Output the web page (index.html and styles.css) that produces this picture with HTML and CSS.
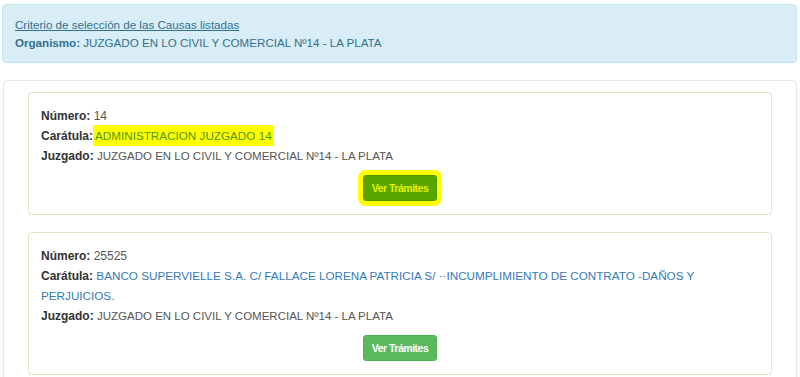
FILE: index.html
```html
<!DOCTYPE html>
<html lang="es">
<head>
  <meta charset="UTF-8">
  <meta name="viewport" content="width=device-width, initial-scale=1.0">
  <title>Causas listadas</title>
  <link rel="stylesheet" href="styles.css">
</head>
<body>
  <div class="alert">
    <a href="#" class="criterio">Criterio de selección de las Causas listadas</a><br>
    <b>Organismo:</b> JUZGADO EN LO CIVIL Y COMERCIAL Nº14 - LA PLATA
  </div>

  <div class="panel">
    <div class="causa">
      <div><b>Número:</b> 14</div>
      <div><b>Carátula:</b><span class="caratula marcado">ADMINISTRACION JUZGADO 14</span></div>
      <div><b>Juzgado:</b> <span class="juzgado">JUZGADO EN LO CIVIL Y COMERCIAL Nº14 - LA PLATA</span></div>
      <div class="acciones">
        <button class="btn marcado-btn">Ver Trámites</button>
      </div>
    </div>

    <div class="causa">
      <div><b>Número:</b> 25525</div>
      <div><b>Carátula:</b> <span class="caratula">BANCO SUPERVIELLE S.A. C/ FALLACE LORENA PATRICIA S/ ··INCUMPLIMIENTO DE CONTRATO -DAÑOS Y PERJUICIOS.</span></div>
      <div><b>Juzgado:</b> <span class="juzgado">JUZGADO EN LO CIVIL Y COMERCIAL Nº14 - LA PLATA</span></div>
      <div class="acciones">
        <button class="btn">Ver Trámites</button>
      </div>
    </div>
  </div>
</body>
</html>
```

FILE: styles.css
```css
body {
  margin: 0;
  padding: 4px 3px 0 2px;
  font-family: "Liberation Sans", Arial, sans-serif;
  font-size: 12px;
  line-height: 20px;
  color: #555;
  background: #fff;
}
b {
  color: #333;
}
.alert {
  padding: 11px 12px 10px;
  font-size: 11.6px;
  line-height: 18px;
  background: #d9edf7;
  border: 1px solid #bce8f1;
  border-radius: 4px;
  color: #31708f;
  margin-bottom: 17px;
}
.alert b {
  color: #31708f;
}
.criterio {
  color: #31708f;
  text-decoration: underline;
}
.panel {
  margin-left: 1px;
  border: 1px solid #e6e6e6;
  border-radius: 4px;
  padding: 11px 24px 0 24px;
  min-height: 300px;
}
.causa {
  border: 1px solid #d6e9c6;
  border-radius: 4px;
  padding: 13px 12px 13px;
  margin-bottom: 17px;
}
.juzgado {
  font-size: 11.5px;
}
.caratula {
  color: #337ab7;
  font-size: 11.7px;
}
.marcado {
  background: #ffff00;
  color: #4f9a00;
  padding: 4px 2px;
}
.acciones {
  text-align: center;
  margin-top: 9px;
  line-height: 0;
}
.btn {
  font-family: "Liberation Sans", Arial, sans-serif;
  font-size: 10.5px;
  font-weight: bold;
  letter-spacing: -0.5px;
  line-height: 24px;
  white-space: nowrap;
  color: #fff;
  background: #5cb85c;
  border: 1px solid #4cae4c;
  border-radius: 3px;
  padding: 0;
  width: 74px;
  cursor: pointer;
}
.marcado-btn {
  background: #58a600;
  border-color: #4f9a00;
  color: #e8f000;
  box-shadow: 0 0 0 5px #ffff00;
}
```
